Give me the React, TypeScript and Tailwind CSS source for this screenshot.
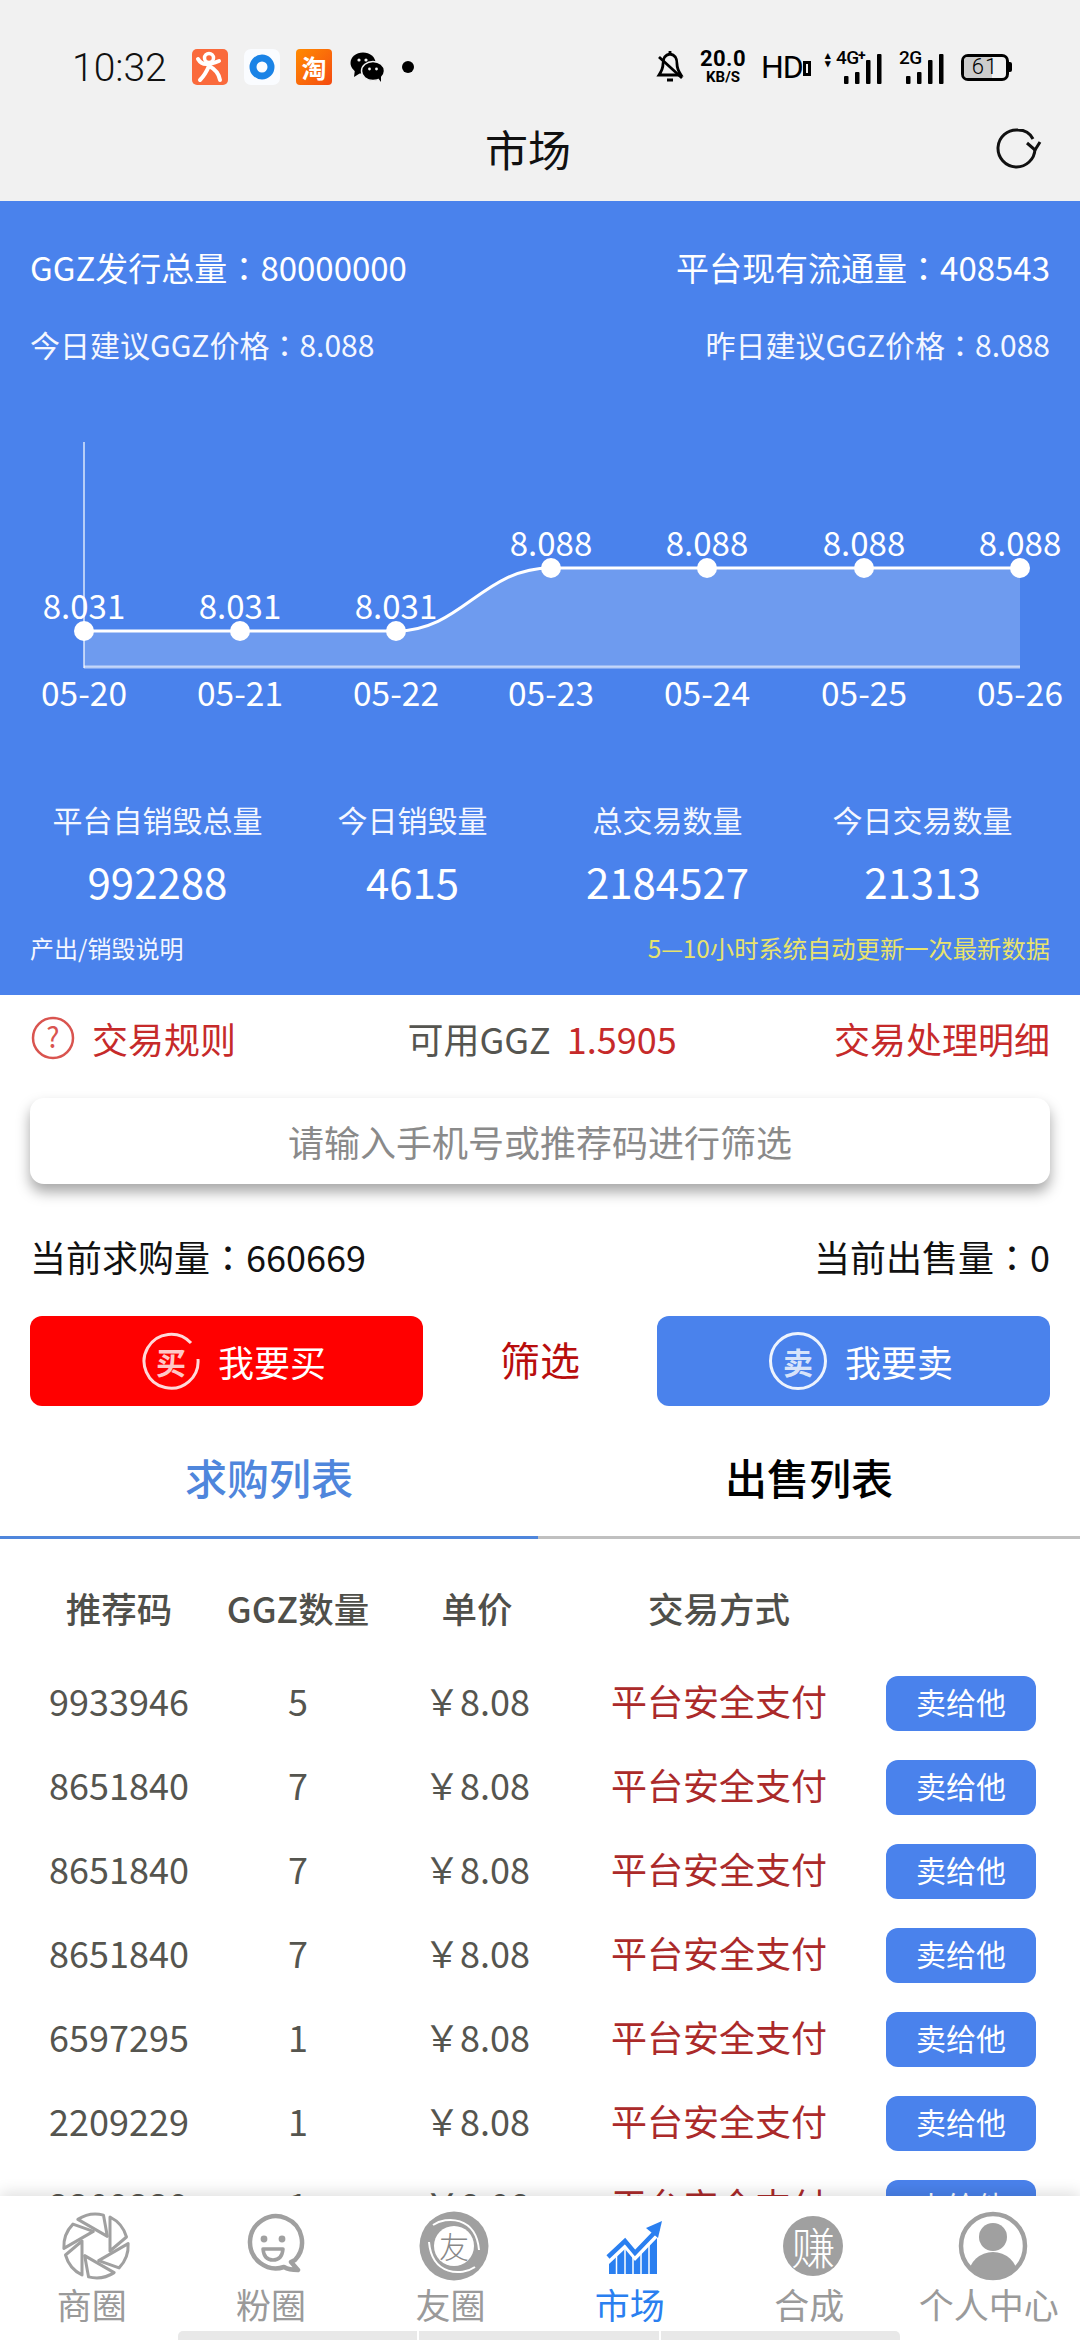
import React from "react";

const rows = [
  ["9933946", "5"],
  ["8651840", "7"],
  ["8651840", "7"],
  ["8651840", "7"],
  ["6597295", "1"],
  ["2209229", "1"],
  ["2209229", "1"],
];

const pts = [84, 240, 396, 551, 707, 864, 1020];
const ys = [630, 630, 630, 567, 567, 567, 567];
const vals = ["8.031", "8.031", "8.031", "8.088", "8.088", "8.088", "8.088"];
const dates = ["05-20", "05-21", "05-22", "05-23", "05-24", "05-25", "05-26"];

function Colon() {
  return <span className="font-['Noto_Sans_CJK_TC',sans-serif]">：</span>;
}

function Chart() {
  const top = 420;
  const line = "M84 630 L396 630 C462 630 482 567 551 567 L1020 567";
  return (
    <svg width="1080" height="305" viewBox={`0 ${top} 1080 305`} className="block">
      <path d={`${line} L1020 666 L84 666 Z`} fill="#ffffff" fillOpacity="0.2" />
      <line x1="84" y1="441" x2="84" y2="667" stroke="#ffffff" strokeOpacity="0.6" strokeWidth="2" />
      <line x1="84" y1="666" x2="1020" y2="666" stroke="#ffffff" strokeOpacity="0.6" strokeWidth="3" />
      <path d={line} fill="none" stroke="#ffffff" strokeWidth="3" />
      {pts.map((x, i) => (
        <g key={x}>
          <circle cx={x} cy={ys[i]} r="10" fill="#ffffff" />
          <text x={x} y={ys[i] - 12} textAnchor="middle" fontSize="33" fill="#ffffff">{vals[i]}</text>
          <text x={x} y="705" textAnchor="middle" fontSize="33.5" fill="#ffffff">{dates[i]}</text>
        </g>
      ))}
    </svg>
  );
}

function Refresh() {
  return (
    <svg width="48" height="48" viewBox="0 0 48 48" className="block">
      <path d="M41 25 A18.5 18.5 0 1 1 24 6 C31 6 36 9 39 15" fill="none" stroke="#111" strokeWidth="3" />
      <path d="M33 19 L41 26 L46 18" fill="none" stroke="#111" strokeWidth="3" />
    </svg>
  );
}

function StatusLeft() {
  return (
    <div className="flex items-center">
      <span className="w-[120px] text-[39px] leading-[40px] pt-[2px] font-['Roboto',sans-serif] font-light text-[#111]">10:32</span>
      <svg width="36" height="36" viewBox="0 0 36 36" className="block">
        <rect width="36" height="36" rx="5" fill="#fa6a3c" />
        <circle cx="17" cy="9" r="4.5" fill="none" stroke="#fff" strokeWidth="3.5" />
        <path d="M6 10 C10 17 17 16 27 12 M17 17 C14 24 11 28 8 31 M17 17 C23 20 27 25 28 31" fill="none" stroke="#fff" strokeWidth="4" strokeLinecap="round" />
      </svg>
      <svg width="36" height="36" viewBox="0 0 36 36" className="block ml-[16px]">
        <rect width="36" height="36" rx="7" fill="#fafcff" />
        <circle cx="18" cy="18" r="9" fill="none" stroke="#1a83e6" strokeWidth="7" />
      </svg>
      <div className="ml-[16px] w-[36px] h-[36px] rounded-[4px] bg-gradient-to-br from-[#ff8a00] to-[#f4480f] flex items-center justify-center text-white text-[25px] leading-none font-bold">淘</div>
      <svg width="34" height="30" viewBox="0 0 34 30" className="block ml-[18px]">
        <ellipse cx="13" cy="11" rx="12.5" ry="10.5" fill="#000" />
        <path d="M5 17 L4 25 L12 20 Z" fill="#000" />
        <ellipse cx="23" cy="19" rx="11.5" ry="9.5" fill="#000" stroke="#f1f1f1" strokeWidth="1.5" />
        <path d="M28 26 L31 30 L31 23 Z" fill="#000" />
        <circle cx="9" cy="8" r="1.6" fill="#f1f1f1" />
        <circle cx="16" cy="8" r="1.6" fill="#f1f1f1" />
        <circle cx="19.5" cy="17" r="1.4" fill="#f1f1f1" />
        <circle cx="26.5" cy="17" r="1.4" fill="#f1f1f1" />
      </svg>
      <span className="ml-[18px] w-[12px] h-[12px] rounded-full bg-black" />
    </div>
  );
}

function Bars({ hs }: { hs: number[] }) {
  return (
    <svg width="38" height="30" viewBox="0 0 38 30" className="block">
      {hs.map((h, i) => (
        <rect key={i} x={i * 11} y={30 - h} width="4.5" height={h} rx="1" fill="#000" />
      ))}
    </svg>
  );
}

function StatusRight() {
  return (
    <div className="flex items-center mt-[3px] font-['Roboto',sans-serif] text-black">
      <svg width="28" height="34" viewBox="0 0 28 34" className="block">
        <path d="M14 4 C8 5 7 9 7 14 C7 19 5 22 3 25 L25 25 C23 22 21 19 21 14 C21 9 20 5 14 4 Z" fill="none" stroke="#000" strokeWidth="2.8" />
        <path d="M14 1 V4 M11 30 H17 M3 7 L26 28" stroke="#000" strokeWidth="2.8" fill="none" />
      </svg>
      <div className="ml-[14px] w-[50px] flex flex-col items-center">
        <span className="text-[22px] leading-[19px] font-bold tracking-[0.5px]">20.0</span>
        <span className="text-[15px] leading-[15px] mt-[2px] font-bold">KB/S</span>
      </div>
      <div className="ml-[13px] w-[50px] flex items-end">
        <span className="text-[32px] leading-[30px] font-normal tracking-[-1px]">HD</span>
        <span className="w-[10px] h-[15px] border-[3px] border-black mb-[6px]" />
      </div>
      <div className="ml-[13px] relative w-[57px] h-[34px]">
        <span className="absolute left-[1px] top-[2px] text-[11px] leading-[8px] font-bold">▴<br />▾</span>
        <span className="absolute left-[12px] top-0 text-[19px] leading-[16px] font-medium tracking-[-0.5px]">4G</span>
        <span className="absolute left-[34px] top-[-2px] text-[14px] leading-[14px] font-bold">+</span>
        <div className="absolute left-[20px] bottom-0">
          <Bars hs={[8, 12, 24, 30]} />
        </div>
      </div>
      <div className="ml-[18px] relative w-[44px] h-[34px]">
        <span className="absolute left-0 top-0 text-[19px] leading-[16px] font-medium tracking-[-0.5px]">2G</span>
        <div className="absolute left-[7px] bottom-0">
          <Bars hs={[8, 12, 24, 30]} />
        </div>
      </div>
      <div className="ml-[18px] flex items-center">
        <div className="w-[48px] h-[27px] rounded-[7px] border-[3px] border-black relative overflow-hidden flex items-center justify-center">
          <div className="absolute left-0 top-0 bottom-0 w-[28px] bg-[#cccccc]" />
          <span className="relative text-[22px] leading-none font-light tracking-[1px]">61</span>
        </div>
        <span className="w-[3px] h-[10px] bg-black rounded-r-[2px]" />
      </div>
    </div>
  );
}

function Shutter() {
  return (
    <svg width="72" height="72" viewBox="-36 -36 72 72" className="block">
      {[0, 60, 120, 180, 240, 300].map((a) => (
        <path key={a} transform={`rotate(${a})`} d="M14 -29 A32 32 0 0 1 30.5 -9 L14 5 Z" fill="none" stroke="#a0a0a0" strokeWidth="3" strokeLinejoin="round" />
      ))}
    </svg>
  );
}

function Face() {
  return (
    <svg width="72" height="72" viewBox="0 0 72 72" className="block">
      <path d="M52 52 L59 60 Q50 60 45 57 A26 26 0 1 1 56 50 Z" fill="none" stroke="#a0a0a0" strokeWidth="4.5" strokeLinejoin="round" />
      <circle cx="25" cy="29" r="3.4" fill="#a0a0a0" />
      <circle cx="43" cy="29" r="3.4" fill="#a0a0a0" />
      <path d="M24 39 H44 Q43 50 34 50 Q25 50 24 39 Z" fill="none" stroke="#a0a0a0" strokeWidth="3.5" strokeLinejoin="round" />
    </svg>
  );
}

function Friend() {
  return (
    <svg width="72" height="72" viewBox="0 0 72 72" className="block">
      <circle cx="36" cy="36" r="34.5" fill="#a0a0a0" />
      <path d="M15 15 C28 6 58 6 61 40 M57 57 C44 66 14 66 11 32" fill="none" stroke="#ffffff" strokeWidth="2" />
      <circle cx="36" cy="36" r="20" fill="#ffffff" />
      <text x="36" y="48" textAnchor="middle" fontSize="30" fontWeight="300" fill="#888888">友</text>
    </svg>
  );
}

function Market() {
  return (
    <svg width="72" height="72" viewBox="0 0 72 72" className="block">
      <path d="M11 54 L27 39 L37 51 L59 28 L59 64 L11 64 Z" fill="#2a7ff0" />
      {[18.5, 27, 35, 43, 51].map((x) => (
        <line key={x} x1={x} y1="30" x2={x} y2="65" stroke="#ffffff" strokeWidth="1.5" />
      ))}
      <path d="M10 47 L27 31 L37 43 L60 19" fill="none" stroke="#ffffff" strokeWidth="8" />
      <path d="M10 47 L27 31 L37 43 L60 19" fill="none" stroke="#2a7ff0" strokeWidth="4.5" />
      <path d="M64 11 L48 18 L60 28 Z" fill="#2a7ff0" />
    </svg>
  );
}

function Earn() {
  return (
    <div className="w-[60px] h-[60px] my-[6px] rounded-full bg-[#a0a0a0] flex items-center justify-center text-white text-[44px] leading-none font-light">赚</div>
  );
}

function Person() {
  return (
    <svg width="72" height="72" viewBox="0 0 72 72" className="block">
      <defs>
        <clipPath id="pc"><circle cx="36" cy="36" r="31" /></clipPath>
      </defs>
      <circle cx="36" cy="36" r="32" fill="#ffffff" stroke="#a0a0a0" strokeWidth="4.5" />
      <circle cx="36" cy="27" r="14" fill="#a0a0a0" />
      <ellipse cx="36" cy="64" rx="24" ry="22" fill="#a0a0a0" clipPath="url(#pc)" />
    </svg>
  );
}

function NavItem({ icon, label, active }: { icon: React.ReactNode; label: string; active?: boolean }) {
  return (
    <div className="flex flex-col items-center w-[179.4px]">
      <div className="h-[72px] ml-[8px] flex items-center justify-center">{icon}</div>
      <span className={`text-[35px] leading-[44px] whitespace-nowrap ${active ? "text-[#2a7ff0]" : "text-[#9a9a9a]"}`}>{label}</span>
    </div>
  );
}

function BadgeIcon({ ch, broken }: { ch: string; broken?: boolean }) {
  return (
    <div className="relative w-[60px] h-[60px] flex items-center justify-center">
      <svg width="60" height="60" viewBox="0 0 60 60" className="absolute left-0 top-0">
        {broken ? (
          <path d="M50 12 A27 27 0 1 0 57 28" fill="none" stroke="#ffffff" strokeOpacity="0.85" strokeWidth="3" />
        ) : (
          <circle cx="30" cy="30" r="27.5" fill="none" stroke="#ffffff" strokeOpacity="0.9" strokeWidth="3" />
        )}
      </svg>
      <span className="relative text-[30px] leading-none font-bold text-[#ffffffcc]">{ch}</span>
    </div>
  );
}

export default function App() {
  return (
    <div className="relative w-[1080px] h-[2340px] overflow-hidden bg-white font-['Noto_Sans_CJK_SC',sans-serif]">
      <div className="h-[201px] bg-[#f1f1f1]">
        <div className="h-[112px] pl-[72px] pr-[68px] pt-[46px] flex items-start justify-between">
          <StatusLeft />
          <StatusRight />
        </div>
        <div className="relative h-[76px] flex items-center justify-center pr-[24px] pb-[4px] text-[43px] leading-none text-[#111]">
          市场
          <div className="absolute right-[38px] top-[12px]">
            <Refresh />
          </div>
        </div>
      </div>

      <div className="h-[794px] bg-[#4a82ec] text-white">
        <div className="pt-[41px] px-[30px] h-[91px] flex justify-between items-end text-[33px] leading-[50px]">
          <span>GGZ发行总量<Colon />80000000</span>
          <span>平台现有流通量<Colon />408543</span>
        </div>
        <div className="mt-[27px] px-[30px] h-[50px] flex justify-between items-center text-[30px] text-[#f4f7ff]">
          <span>今日建议GGZ价格<Colon />8.088</span>
          <span>昨日建议GGZ价格<Colon />8.088</span>
        </div>
        <div className="mt-[52px]">
          <Chart />
        </div>
        <div className="mt-[71px] px-[30px] grid grid-cols-4 text-center">
          {[
            ["平台自销毁总量", "992288"],
            ["今日销毁量", "4615"],
            ["总交易数量", "2184527"],
            ["今日交易数量", "21313"],
          ].map(([a, b]) => (
            <div key={a} className="flex flex-col items-center">
              <span className="text-[30px] leading-[44px] text-[#f4f7ff]">{a}</span>
              <span className="mt-[10px] text-[42px] leading-[60px]">{b}</span>
            </div>
          ))}
        </div>
        <div className="mt-[19px] px-[30px] h-[36px] flex justify-between items-center text-[24px]">
          <span className="text-[#f4f7ff]">产出/销毁说明</span>
          <span className="text-[#e8e36c] text-[24.3px]">5—10小时系统自动更新一次最新数据</span>
        </div>
      </div>

      <div className="h-[90px] px-[30px] pb-[5px] flex items-center justify-between text-[36px] leading-none">
        <div className="flex items-center text-[#c62a2a]">
          <svg width="46" height="46" viewBox="0 0 46 46" className="block">
            <circle cx="23" cy="23" r="20" fill="none" stroke="#d9544f" strokeWidth="2.5" />
            <text x="23" y="33" textAnchor="middle" fontSize="28" fill="#d9544f">?</text>
          </svg>
          <span className="ml-[16px]">交易规则</span>
        </div>
        <div className="flex items-center ml-[14px] text-[#555550]">
          <span>可用GGZ</span>
          <span className="ml-[16px] text-[#c62a2a]">1.5905</span>
        </div>
        <span className="text-[#c62a2a]">交易处理明细</span>
      </div>

      <div className="mx-[30px] mt-[13px] h-[86px] rounded-[14px] bg-white shadow-[0_8px_14px_rgba(0,0,0,0.35)] flex items-center justify-center text-[36px] text-[#8a8a8a]">
        请输入手机号或推荐码进行筛选
      </div>

      <div className="mt-[49px] mx-[30px] h-[50px] pb-[5px] flex items-center justify-between text-[36px] text-[#111]">
        <span>当前求购量<Colon />660669</span>
        <span>当前出售量<Colon />0</span>
      </div>

      <div className="mt-[33px] mx-[30px] flex items-center justify-between">
        <div className="w-[393px] h-[90px] rounded-[12px] bg-[#ff0000] pl-[14px] flex items-center justify-center text-white text-[36px]">
          <BadgeIcon ch="买" broken />
          <span className="ml-[17px]">我要买</span>
        </div>
        <span className="text-[40px] pb-[4px] text-[#b80d0d]">筛选</span>
        <div className="w-[393px] h-[90px] rounded-[12px] bg-[#4a82ec] pl-[14px] flex items-center justify-center text-white text-[36px]">
          <BadgeIcon ch="卖" />
          <span className="ml-[17px]">我要卖</span>
        </div>
      </div>

      <div className="mt-[14px] h-[119px] grid grid-cols-[538px_542px] text-[42px] font-medium">
        <div className="flex items-center justify-center pb-[4px] border-b-[3px] border-[#4f86dc] text-[#4f86dc]">求购列表</div>
        <div className="flex items-center justify-center pb-[4px] border-b-[3px] border-[#c0c0c0] text-black">出售列表</div>
      </div>

      <div className="mt-[45px] h-[50px] pb-[2px] grid grid-cols-[238px_120px_238px_246px_238px] items-center text-center text-[35.5px] leading-[36px] font-medium text-[#4f4f4a] whitespace-nowrap">
        <span>推荐码</span>
        <span className="justify-self-center">GGZ数量</span>
        <span>单价</span>
        <span>交易方式</span>
        <span />
      </div>

      <div className="mt-[27px]">
        {rows.map(([code, n], i) => (
          <div key={i} className="h-[84px] grid grid-cols-[238px_120px_238px_246px_238px] items-center text-center text-[36px] text-[#55554f]">
            <span className="pb-[7px]">{code}</span>
            <span className="pb-[7px]">{n}</span>
            <span className="pb-[7px]">￥8.08</span>
            <span className="pb-[7px] text-[#ab2a2a]">平台安全支付</span>
            <div className="flex justify-center">
              <div className="w-[150px] h-[55px] pb-[4px] rounded-[12px] bg-[#4a82ec] text-white text-[30px] flex items-center justify-center">卖给他</div>
            </div>
          </div>
        ))}
      </div>

      <div className="absolute left-0 right-0 bottom-0 h-[144px] bg-white shadow-[0_-4px_14px_rgba(0,0,0,0.12)]">
        <div className="flex pt-[14px] pl-[2px]">
          <NavItem icon={<Shutter />} label="商圈" />
          <NavItem icon={<Face />} label="粉圈" />
          <NavItem icon={<Friend />} label="友圈" />
          <NavItem icon={<Market />} label="市场" active />
          <NavItem icon={<Earn />} label="合成" />
          <NavItem icon={<Person />} label="个人中心" />
        </div>
        <div className="absolute bottom-0 left-[178px] w-[722px] h-[9px] rounded-t-[5px] flex gap-[2px] overflow-hidden">
          <div className="flex-1 bg-[#e8e8e8]" />
          <div className="flex-1 bg-[#e8e8e8]" />
          <div className="flex-1 bg-[#e8e8e8]" />
        </div>
      </div>
    </div>
  );
}
